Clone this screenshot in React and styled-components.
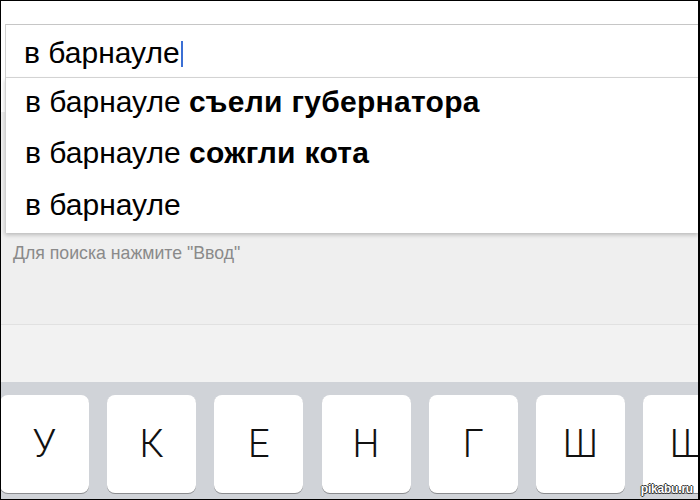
import React from "react";
import styled, { createGlobalStyle } from "styled-components";

const Global = createGlobalStyle`
  html, body { margin: 0; padding: 0; background: #fff; }
  * { box-sizing: border-box; }
`;

const Frame = styled.div`
  position: relative;
  width: 700px;
  height: 500px;
  border: 1px solid #000;
  border-right-width: 2px;
  overflow: hidden;
  display: flex;
  flex-direction: column;
  background: #efefef;
  font-family: "Liberation Sans", Arial, sans-serif;
`;

const Header = styled.div`
  background: #fff;
  padding: 23px 0 34px 4px;
  flex: 0 0 auto;
`;

const SearchBox = styled.div`
  position: relative;
  border-top: 1px solid #c6c6c6;
  border-left: 1px solid #d0d0d0;
  background: #fff;
  z-index: 2;
`;

const InputRow = styled.div`
  height: 53px;
  padding: 3px 0 0 18px;
  display: flex;
  align-items: center;
  font-size: 30px;
  color: #000;
  border-bottom: 1px solid #d9d9d9;
`;

const Caret = styled.span`
  display: inline-block;
  width: 2px;
  height: 26px;
  margin-left: 1px;
  margin-top: 2px;
  background: #3b6fd4;
`;

const Suggestions = styled.ul`
  position: absolute;
  top: 100%;
  left: -1px;
  right: 0;
  margin: 0;
  padding: 0;
  list-style: none;
  background: #fff;
  border-left: 1px solid #d0d0d0;
  box-shadow: 0 2px 4px rgba(0, 0, 0, 0.22);
`;

const Suggestion = styled.li`
  height: 51.5px;
  padding: 0 0 4px 19px;
  display: flex;
  align-items: center;
  font-size: 30px;
  color: #000;
  white-space: pre;
`;

const Bold = styled.b`
  font-weight: 700;
  letter-spacing: 0.3px;
`;

const Content = styled.div`
  height: 213px;
  padding: 131px 0 0 12px;
  border-bottom: 1px solid #e1e1e1;
  flex: 0 0 auto;
`;

const Hint = styled.div`
  font-size: 17.7px;
  line-height: 20px;
  color: #8a8a8a;
`;

const Band = styled.div`
  height: 57px;
  background: #f2f2f2;
  flex: 0 0 auto;
`;

const Keyboard = styled.div`
  flex: 1 1 auto;
  background: #d0d3d8;
  padding-top: 13px;
`;

const KeyRow = styled.div`
  display: flex;
  gap: 18.2px;
  margin-left: -1px;
`;

const Key = styled.div`
  flex: 0 0 89px;
  height: 98px;
  background: #fff;
  border-radius: 8px;
  box-shadow: 0 1px 0 #8c8d90;
  display: flex;
  align-items: center;
  justify-content: center;
  font-family: Roboto, "Liberation Sans", sans-serif;
  font-weight: 300;
  font-size: 38px;
  color: #111;
`;

const Watermark = styled.div`
  position: absolute;
  right: 5px;
  bottom: 3px;
  font-family: "Liberation Sans", Arial, sans-serif;
  font-size: 12px;
  font-weight: 700;
  color: #fff;
  letter-spacing: -0.2px;
  text-shadow: -1px 0 #333, 1px 0 #333, 0 -1px #333, 0 1px #333;
`;

const suggestions = [
  { base: "в барнауле ", bold: "съели губернатора" },
  { base: "в барнауле ", bold: "сожгли кота" },
  { base: "в барнауле", bold: "" },
];

const keys = ["У", "К", "Е", "Н", "Г", "Ш", "Щ"];

export default function App() {
  return (
    <>
      <Global />
      <Frame>
        <Header>
          <SearchBox>
            <InputRow>
              <span>в барнауле</span>
              <Caret />
            </InputRow>
            <Suggestions>
              {suggestions.map((s, i) => (
                <Suggestion key={i}>
                  {s.base}
                  {s.bold && <Bold>{s.bold}</Bold>}
                </Suggestion>
              ))}
            </Suggestions>
          </SearchBox>
        </Header>
        <Content>
          <Hint>Для поиска нажмите "Ввод"</Hint>
        </Content>
        <Band />
        <Keyboard>
          <KeyRow>
            {keys.map((k) => (
              <Key key={k}>{k}</Key>
            ))}
          </KeyRow>
        </Keyboard>
        <Watermark>pikabu.ru</Watermark>
      </Frame>
    </>
  );
}
